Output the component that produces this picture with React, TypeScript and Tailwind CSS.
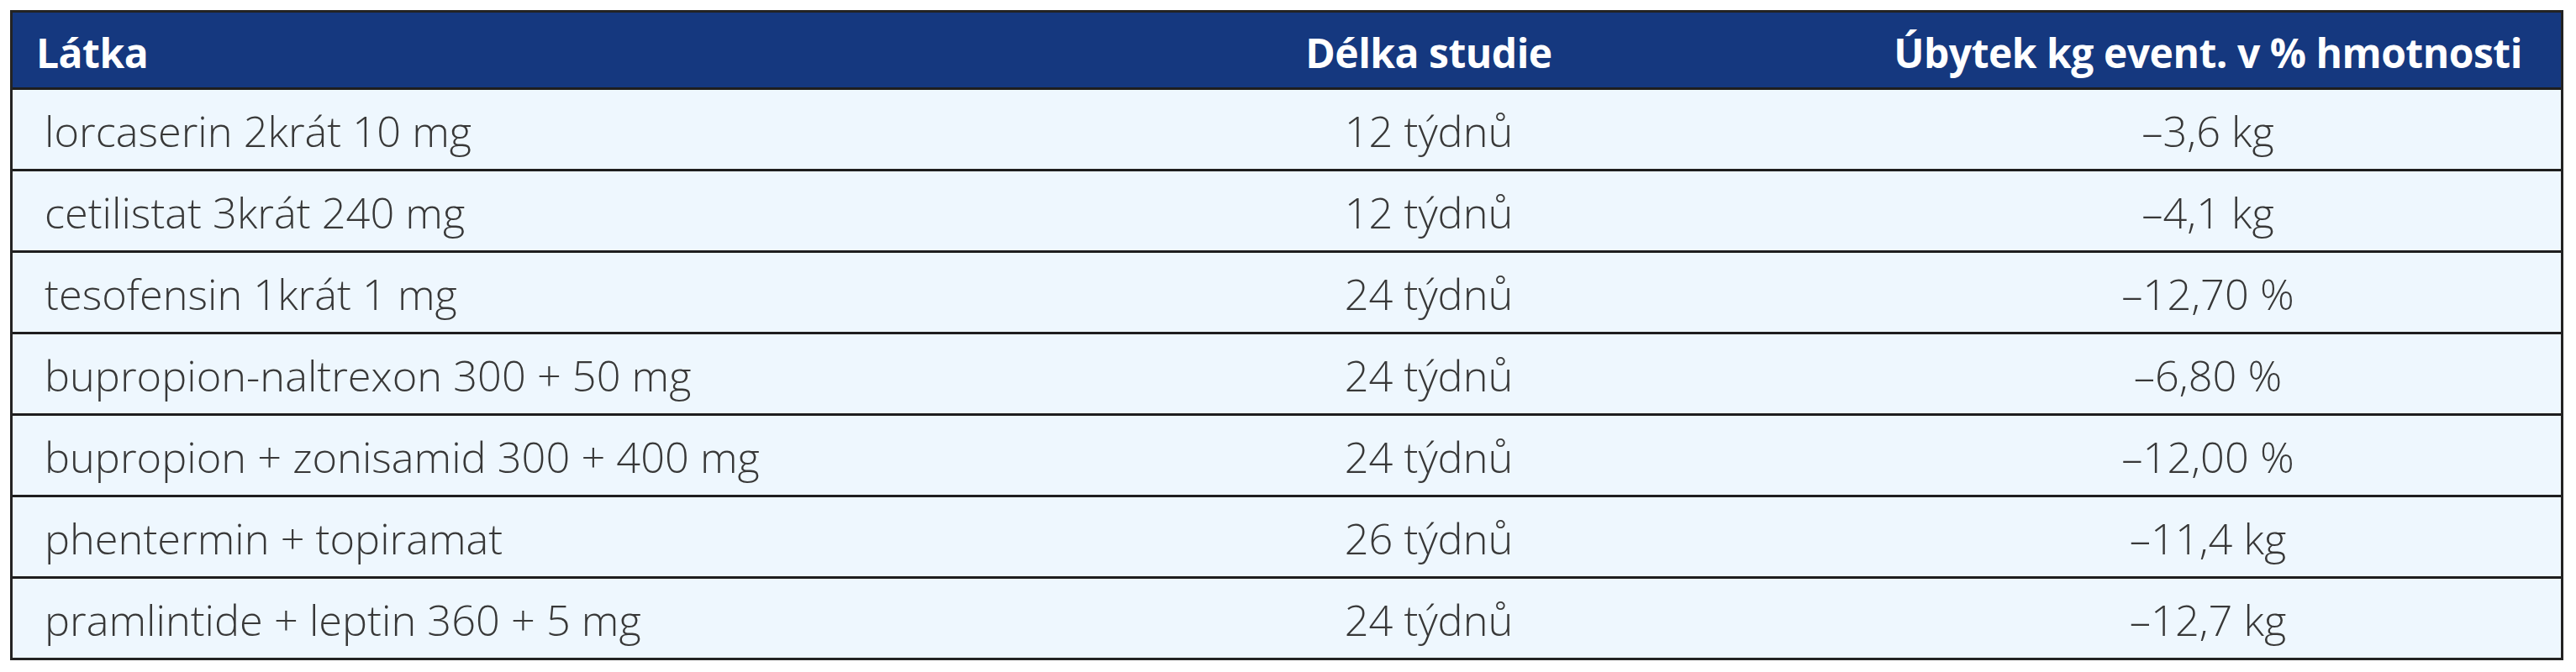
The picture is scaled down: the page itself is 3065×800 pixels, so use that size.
const rows = [
  ['lorcaserin 2krát 10 mg', '12 týdnů', '–3,6 kg'],
  ['cetilistat 3krát 240 mg', '12 týdnů', '–4,1 kg'],
  ['tesofensin 1krát 1 mg', '24 týdnů', '–12,70 %'],
  ['bupropion-naltrexon 300 + 50 mg', '24 týdnů', '–6,80 %'],
  ['bupropion + zonisamid 300 + 400 mg', '24 týdnů', '–12,00 %'],
  ['phentermin + topiramat', '26 týdnů', '–11,4 kg'],
  ['pramlintide + leptin 360 + 5 mg', '24 týdnů', '–12,7 kg'],
];

const font = { fontFamily: '"Open Sans", "Noto Sans", sans-serif' };

export default function App() {
  return (
    <div className="bg-white pl-[12px] pt-[12px] pb-[14px]" style={font}>
      <div className="w-[3038px] border-[3px] border-[#232323] bg-[#eef7fe]">
        {/* Header */}
        <div className="flex h-[89px] bg-[#15387f] text-white font-bold text-[48px] tracking-[-0.5px] border-b-[3px] border-[#1e1e1e] box-content">
          <div className="w-[1178px] shrink-0 flex items-center pl-[28px] pt-[6px]">Látka</div>
          <div className="w-[1014px] shrink-0 flex items-center justify-center pt-[6px]">Délka studie</div>
          <div className="flex-1 flex items-center justify-center pt-[6px]">Úbytek kg event. v % hmotnosti</div>
        </div>
        {/* Body */}
        {rows.map((r, i) => (
          <div
            key={i}
            className={`flex h-[94px] text-[50.5px] font-light text-[#383838] box-content ${
              i < rows.length - 1 ? 'border-b-[3px] border-[#1e1e1e]' : ''
            }`}
          >
            <div className="w-[1178px] shrink-0 flex items-center pl-[38px] pt-[4px]">{r[0]}</div>
            <div className="w-[1014px] shrink-0 flex items-center justify-center pt-[4px]">{r[1]}</div>
            <div className="flex-1 flex items-center justify-center pt-[4px]">{r[2]}</div>
          </div>
        ))}
      </div>
    </div>
  );
}
